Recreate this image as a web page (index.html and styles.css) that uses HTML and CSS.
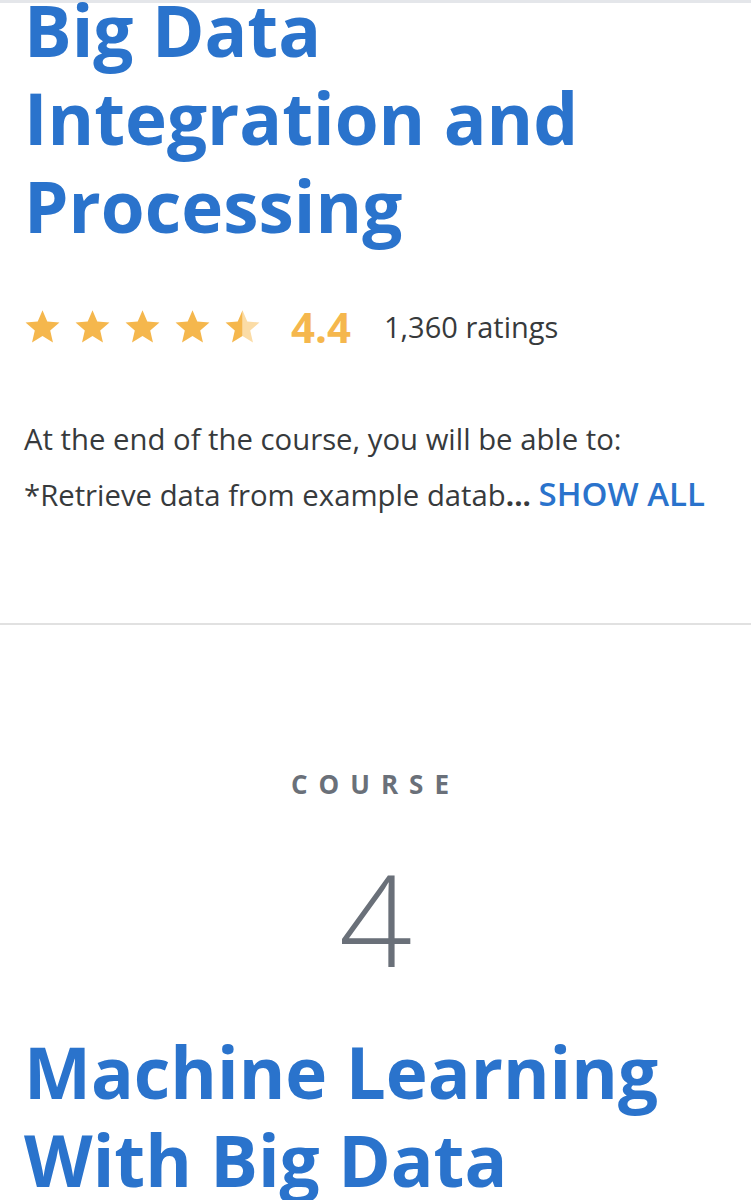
FILE: index.html
```html
<!DOCTYPE html>
<html lang="en">
<head>
    <meta charset="UTF-8">
    <meta name="viewport" content="width=device-width, initial-scale=1.0">
    <title>Big Data Specialization</title>
    <link rel="stylesheet" href="styles.css">
</head>
<body>
    <div class="top-edge"></div>

    <section class="course">
        <h2 class="course-title">Big Data Integration and Processing</h2>

        <div class="rating">
            <div class="stars">
                <svg class="star" viewBox="0 0 24 24"><path d="M12 1.5l3.1 7.3 7.9.6-6 5.2 1.8 7.7L12 18.2l-6.8 4.1L7 14.6 1 9.4l7.9-.6z"/></svg>
                <svg class="star" viewBox="0 0 24 24"><path d="M12 1.5l3.1 7.3 7.9.6-6 5.2 1.8 7.7L12 18.2l-6.8 4.1L7 14.6 1 9.4l7.9-.6z"/></svg>
                <svg class="star" viewBox="0 0 24 24"><path d="M12 1.5l3.1 7.3 7.9.6-6 5.2 1.8 7.7L12 18.2l-6.8 4.1L7 14.6 1 9.4l7.9-.6z"/></svg>
                <svg class="star" viewBox="0 0 24 24"><path d="M12 1.5l3.1 7.3 7.9.6-6 5.2 1.8 7.7L12 18.2l-6.8 4.1L7 14.6 1 9.4l7.9-.6z"/></svg>
                <!-- half star: left filled, right pale -->
                <svg class="star" viewBox="0 0 24 24">
                    <path class="star-pale" d="M12 1.5l3.1 7.3 7.9.6-6 5.2 1.8 7.7L12 18.2z"/>
                    <path d="M12 1.5L8.9 8.8 1 9.4l6 5.2-1.8 7.7L12 18.2z"/>
                </svg>
            </div>
            <span class="score">4.4</span>
            <span class="count">1,360 ratings</span>
        </div>

        <div class="summary">
            <p>At the end of the course, you will be able to:</p>
            <p>*Retrieve data from example datab<b>...</b> <a href="#" class="show-all">SHOW ALL</a></p>
        </div>
    </section>

    <hr class="divider">

    <section class="course course-next">
        <div class="course-label">Course</div>
        <div class="course-number">4</div>
        <h2 class="course-title">Machine Learning With Big Data</h2>
    </section>
</body>
</html>
```

FILE: styles.css
```css
body {
    margin: 0;
    font-family: "Open Sans", "Noto Sans", sans-serif;
    color: #373a3c;
    background: #fff;
    overflow: hidden;
}

.top-edge {
    height: 3px;
    background: #e4e6ea;
}

.course {
    padding: 0 24px;
}

.course-title {
    margin: -17px 0 0;
    font-size: 71px;
    line-height: 88px;
    font-weight: 700;
    color: #2a73cc;
}

.rating {
    display: flex;
    align-items: center;
    margin-top: 48px;
}

.stars {
    display: flex;
    gap: 13px;
}

.star {
    width: 37px;
    height: 37px;
    fill: #f5b74d;
}

.star .star-pale {
    fill: #fbdca6;
}

.score {
    margin-left: 30px;
    font-size: 42px;
    font-weight: 700;
    color: #f5b74d;
}

.count {
    margin-left: 33px;
    font-size: 29px;
}

.summary {
    margin-top: 65px;
    font-size: 29.3px;
}

.summary p {
    margin: 0;
    line-height: 38px;
}

.summary p + p {
    margin-top: 17px;
}

.summary b {
    font-weight: 700;
}

.show-all {
    color: #2a73cc;
    font-weight: 600;
    font-size: 33px;
    text-decoration: none;
}

.divider {
    margin: 109px 0 0;
    border: 0;
    border-top: 2px solid #e1e1e1;
}

.course-next {
    text-align: center;
    padding-top: 141px;
}

.course-next .course-title {
    margin-top: 46px;
    text-align: left;
}

.course-label {
    font-size: 26px;
    font-weight: 700;
    letter-spacing: 11px;
    text-transform: uppercase;
    color: #6a7079;
}

.course-number {
    margin-top: 52px;
    font-size: 128px;
    line-height: 1;
    font-weight: 300;
    color: #6a7079;
}
```
